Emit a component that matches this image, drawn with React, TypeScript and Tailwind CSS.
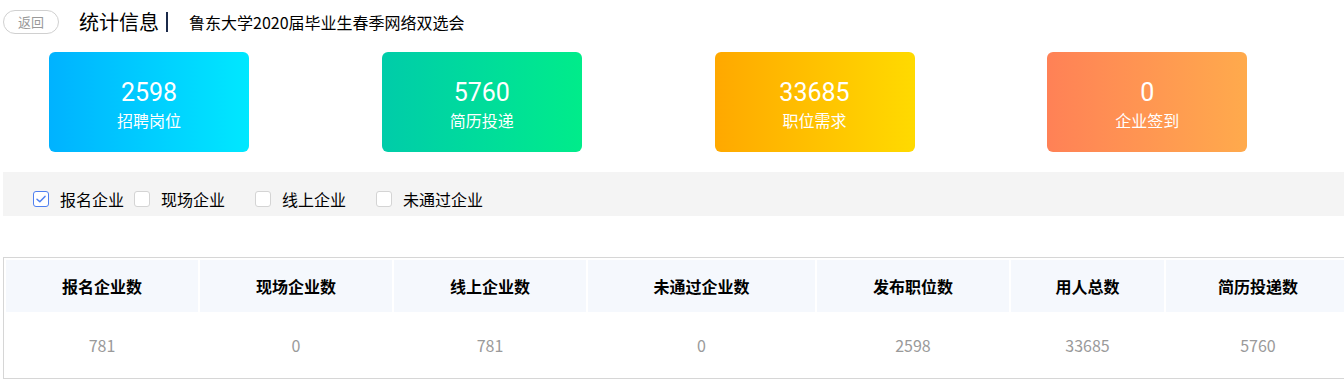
const stats = [
  { value: "2598", label: "招聘岗位", bg: "bg-gradient-to-r from-[#00b2ff] to-[#00e8ff]" },
  { value: "5760", label: "简历投递", bg: "bg-gradient-to-r from-[#00cca9] to-[#00ec8a]" },
  { value: "33685", label: "职位需求", bg: "bg-gradient-to-r from-[#ffa800] to-[#ffda00]" },
  { value: "0", label: "企业签到", bg: "bg-gradient-to-r from-[#ff8156] to-[#ffaa4c]" },
];

const filters = [
  { label: "报名企业", checked: true, gap: "mr-[10px]" },
  { label: "现场企业", checked: false, gap: "mr-[30px]" },
  { label: "线上企业", checked: false, gap: "mr-[30px]" },
  { label: "未通过企业", checked: false, gap: "" },
];

const columns = [
  { title: "报名企业数", value: "781", w: "w-[192px]" },
  { title: "现场企业数", value: "0", w: "w-[192px]" },
  { title: "线上企业数", value: "781", w: "w-[192px]" },
  { title: "未通过企业数", value: "0", w: "w-[227px]" },
  { title: "发布职位数", value: "2598", w: "w-[192px]" },
  { title: "用人总数", value: "33685", w: "w-[153px]" },
  { title: "简历投递数", value: "5760", w: "w-[184px]" },
];

function Checkbox({ checked }: { checked: boolean }) {
  return (
    <span
      className={[
        "flex size-4 shrink-0 items-center justify-center rounded-[3px] border bg-white",
        checked ? "border-[#4f80f0]" : "border-[#d4d4d4]",
      ].join(" ")}
    >
      {checked ? (
        <svg width="12" height="12" viewBox="0 0 12 12" aria-hidden>
          <path d="M2 6.2 4.8 8.8 10 3.4" fill="none" stroke="#4f80f0" strokeWidth="1.5" strokeLinecap="round" strokeLinejoin="round" />
        </svg>
      ) : null}
    </span>
  );
}

export default function App() {
  return (
    <div className="h-[381px] w-[1344px] overflow-hidden bg-white font-['Noto_Sans_CJK_SC','Noto_Sans',sans-serif] text-black">
      <div className="flex h-[42px] items-center pl-[3px] pt-[1px]">
        <button
          type="button"
          className="flex h-[24px] w-[56px] items-center justify-center rounded-full border border-[#d0d0d0] text-[13px] leading-none text-[#999]"
        >
          返回
        </button>
        <span className="ml-[20px] text-[20px] leading-none">统计信息</span>
        <span className="ml-[7px] h-[20px] w-[2px] bg-[#1b2a4a]" />
        <span className="ml-[21px] text-[16px] leading-none">鲁东大学2020届毕业生春季网络双选会</span>
      </div>

      <div className="mt-[10px] grid w-[1331px] grid-cols-4">
        {stats.map((s) => (
          <div
            key={s.label}
            className={`ml-[49px] flex h-[100px] w-[200px] flex-col items-center justify-center rounded-[6px] pt-[5px] text-white ${s.bg}`}
          >
            <div className="font-['Roboto',sans-serif] text-[25px] leading-[30px]">{s.value}</div>
            <div className="text-[16px] leading-[24px]">{s.label}</div>
          </div>
        ))}
      </div>

      <div className="ml-[3px] mt-[20px] flex h-[44px] items-center bg-[#f4f4f4] pl-[30px] pt-[9px]">
        {filters.map((f) => (
          <label key={f.label} className={`flex items-center ${f.gap}`}>
            <Checkbox checked={f.checked} />
            <span className="ml-[11px] text-[16px] leading-none">{f.label}</span>
          </label>
        ))}
      </div>

      <table className="ml-[3px] mt-[41px] w-[1350px] table-fixed border-separate border-spacing-[2px] border border-[#d6d6d6]">
        <thead>
          <tr>
            {columns.map((c) => (
              <th key={c.title} className={`${c.w} h-[52px] bg-[#f5f8fd] p-0 text-center text-[16px] font-bold`}>
                {c.title}
              </th>
            ))}
          </tr>
        </thead>
        <tbody>
          <tr>
            {columns.map((c) => (
              <td key={c.title} className="h-[62px] p-0 text-center text-[16px] text-[#9a9a9a]">
                {c.value}
              </td>
            ))}
          </tr>
        </tbody>
      </table>
    </div>
  );
}
